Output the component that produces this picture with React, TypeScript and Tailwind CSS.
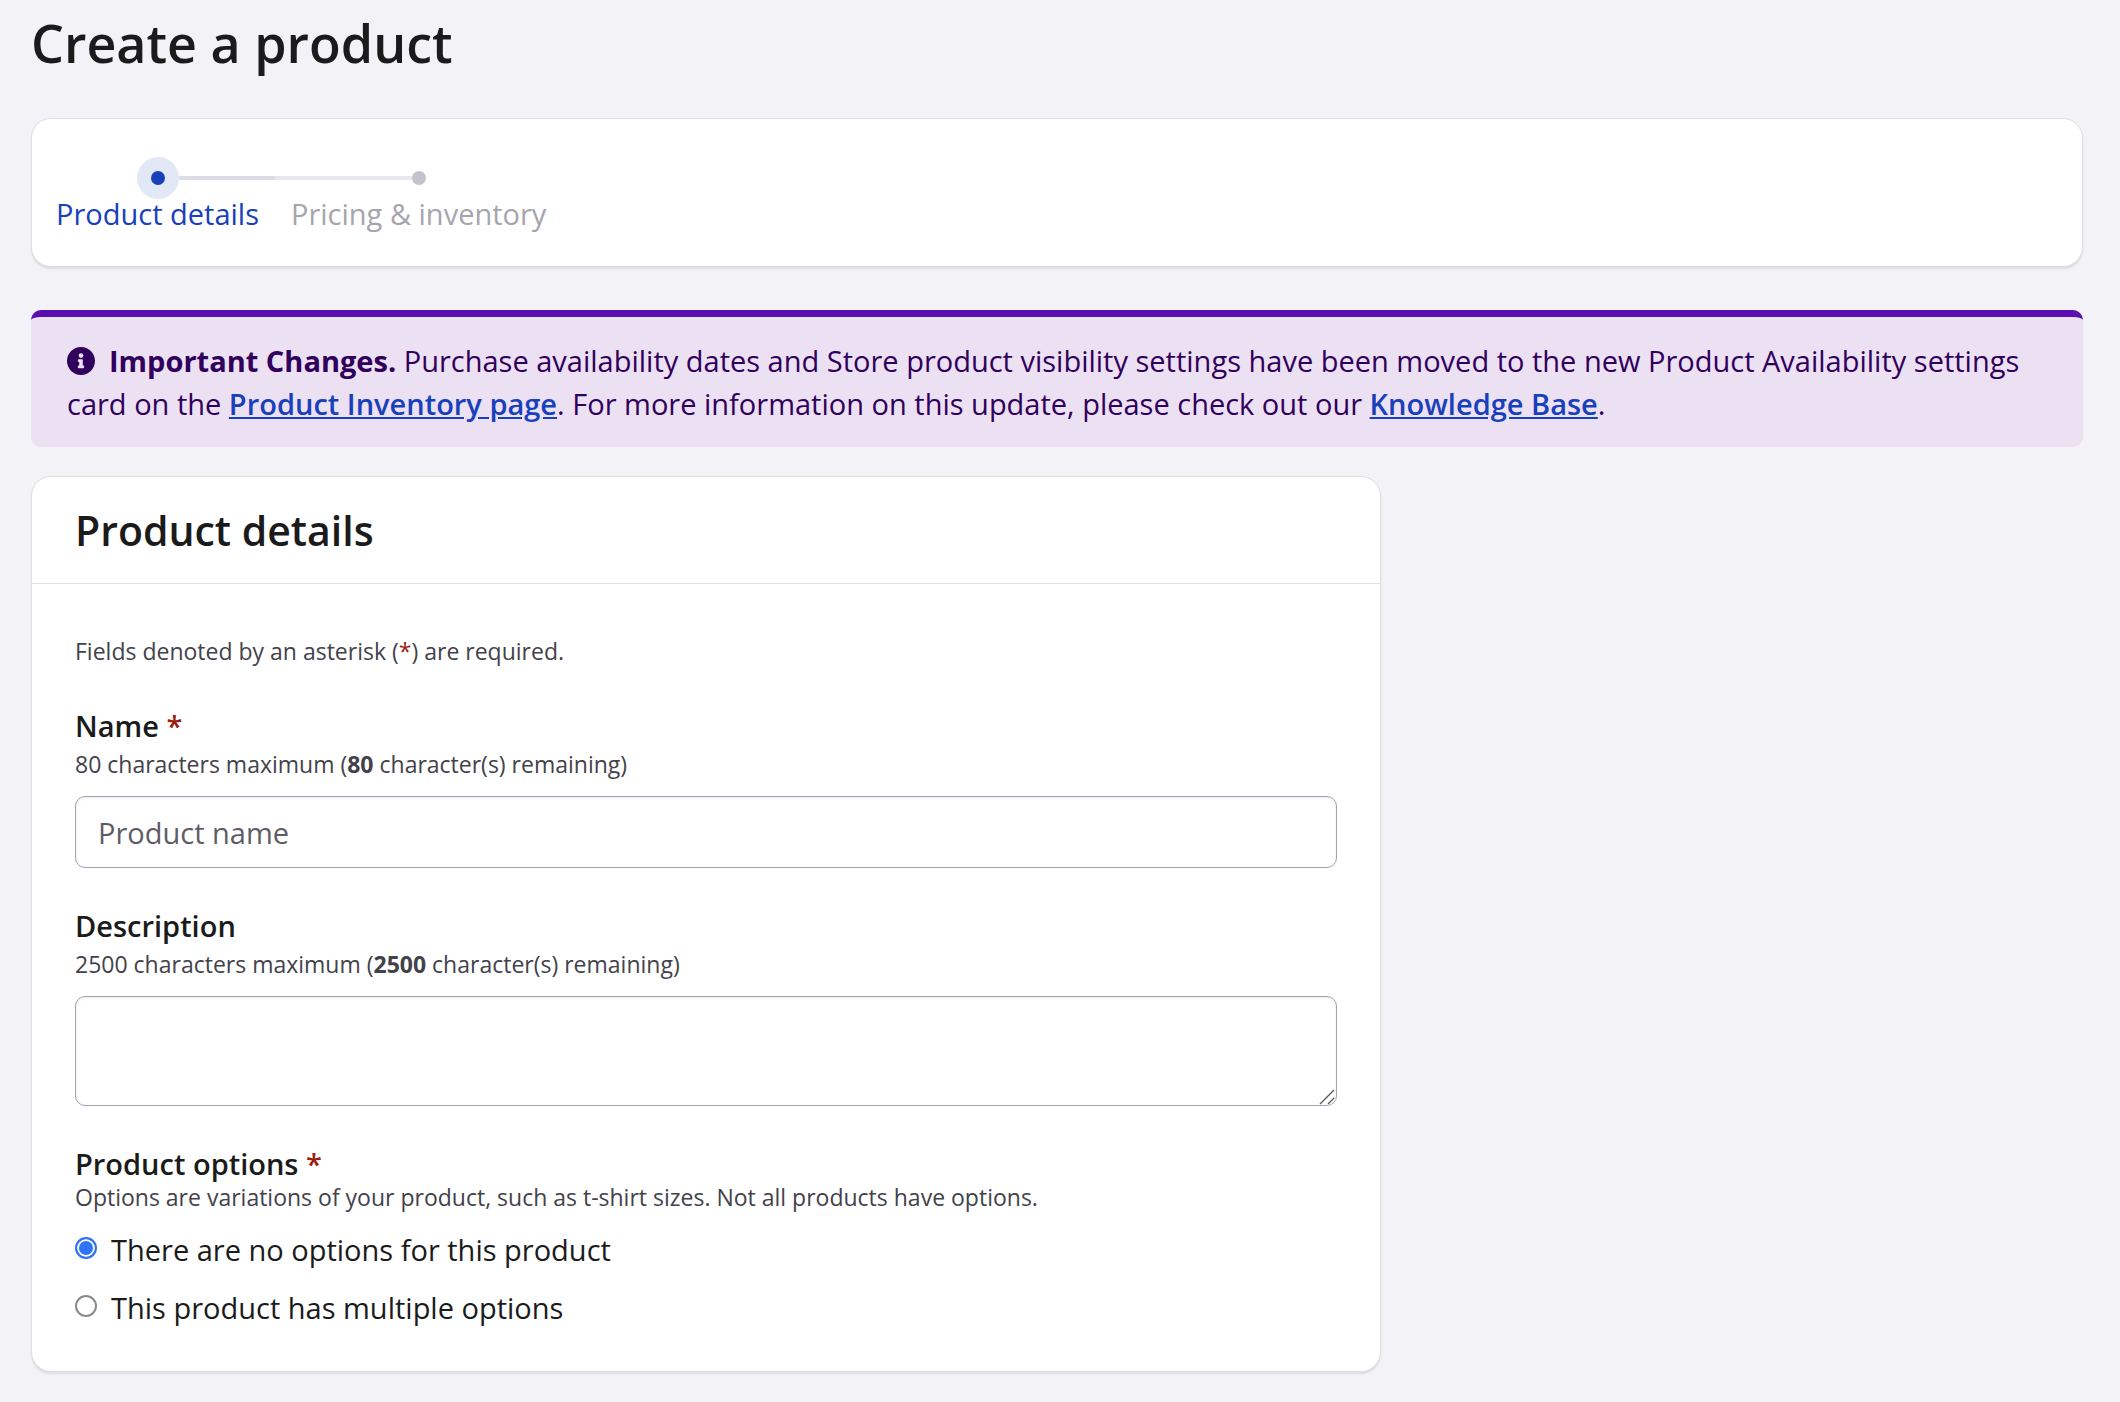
import { useState } from "react"
import type { ReactNode } from "react"
import { clsx } from "clsx"

const NAME_MAX = 80
const DESCRIPTION_MAX = 2500

const steps = ["Product details", "Pricing & inventory"]

const options = [
  { value: "single", label: "There are no options for this product" },
  { value: "multiple", label: "This product has multiple options" },
]

function InfoIcon() {
  return (
    <svg viewBox="8 8 496 496" className="mr-3.5 inline-block size-7 align-[-3px]" fill="currentColor" aria-hidden="true">
      <path d="M256 8C119 8 8 119 8 256s111 248 248 248 248-111 248-248S393 8 256 8zm0 110a42 42 0 1 1 0 84 42 42 0 0 1 0-84zm56 254c0 6.600-5.400 12-12 12h-88c-6.600 0-12-5.400-12-12v-24c0-6.600 5.400-12 12-12h12v-64h-12c-6.600 0-12-5.400-12-12v-24c0-6.600 5.400-12 12-12h64c6.600 0 12 5.400 12 12v100h12c6.600 0 12 5.400 12 12v24z" />
    </svg>
  )
}

function ResizeGrip() {
  return (
    <svg
      viewBox="0 0 16 16"
      className="pointer-events-none absolute right-0.5 bottom-px size-4"
      stroke="#555"
      strokeWidth="1.3"
      aria-hidden="true"
    >
      <path d="M1 15 15 1M9 15l6-6" />
    </svg>
  )
}

function Asterisk() {
  return <span className="text-[#9b1c10]">*</span>
}

function Stepper({ current }: { current: number }) {
  return (
    <ol className="flex">
      {steps.map((step, i) => (
        <li key={step} className="flex flex-col">
          <div className="flex h-[42px] items-center">
            <span className={clsx("h-1 flex-1", i > 0 && "bg-[#e8e8ec]")} />
            {i === current ? (
              <span className="flex size-[42px] items-center justify-center rounded-full bg-[#e2e8f6]">
                <span className="size-3.5 rounded-full bg-[#1840ba]" />
              </span>
            ) : (
              <span className="size-3.5 rounded-full bg-[#c4c3cd]" />
            )}
            <span className={clsx("h-1 flex-1", i < steps.length - 1 && "bg-[#dcdce6]")} />
          </div>
          <span className={clsx("px-4 leading-[30px]", i === current ? "text-[#1840ba]" : "text-[#a6a5ad]")}>
            {step}
          </span>
        </li>
      ))}
    </ol>
  )
}

function Remaining({ max, used }: { max: number; used: number }) {
  return (
    <p className="text-[23px] leading-[34px] text-[#43424b]">
      {max} characters maximum (<strong>{max - used}</strong> character(s) remaining)
    </p>
  )
}

function Card({ className, children }: { className?: string; children: ReactNode }) {
  return (
    <section
      className={clsx("rounded-[20px] border border-[#dfdfe2] bg-white shadow-[0_2px_2px_rgba(0,0,0,0.09)]", className)}
    >
      {children}
    </section>
  )
}

export default function App() {
  const [name, setName] = useState("")
  const [description, setDescription] = useState("")
  const [option, setOption] = useState("single")

  return (
    <main className="min-h-screen bg-[#f3f2f7] pr-[37px] pb-7 pl-[31px] font-['Open_Sans',sans-serif] text-[29px] leading-[43px] text-[#1b1b1b]">
      <h1 className="pt-[7px] text-[52px] leading-[72px] font-semibold">Create a product</h1>

      <Card className="mt-[39px] px-2 pt-[38px] pb-[37px]">
        <Stepper current={0} />
      </Card>

      <div className="mt-[43px] rounded-[10px] border-t-[7px] border-[#5b0eaf] bg-[#ece0f3] px-9 py-[22px] text-[#30005c]">
        <InfoIcon />
        <strong>Important Changes.</strong> Purchase availability dates and Store product visibility settings have been
        moved to the new Product Availability settings card on the{" "}
        <a href="#inventory" className="font-semibold text-[#1840ba] underline">
          Product Inventory page
        </a>
        . For more information on this update, please check out our{" "}
        <a href="#knowledge-base" className="font-semibold text-[#1840ba] underline">
          Knowledge Base
        </a>
        .
      </div>

      <div className="mt-[29px] grid grid-cols-3 gap-[54px]">
        <Card className="col-span-2">
          <h2 className="border-b border-[#dfdfe2] px-[43px] py-[25px] text-[41px] leading-14 font-semibold">
            Product details
          </h2>

          <form className="px-[43px] pt-[50px] pb-[42px]">
            <p className="text-[23px] leading-[34px] text-[#43424b]">
              Fields denoted by an asterisk (<Asterisk />) are required.
            </p>

            <div className="mt-9">
              <label htmlFor="name" className="block font-semibold">
                Name <Asterisk />
              </label>
              <Remaining max={NAME_MAX} used={name.length} />
              <input
                id="name"
                type="text"
                maxLength={NAME_MAX}
                placeholder="Product name"
                value={name}
                onChange={(e) => setName(e.target.value)}
                className="mt-[15px] block h-[72px] w-full rounded-[10px] border border-[#a3a1b0] bg-white px-[22px] shadow-[inset_0_1px_3px_rgba(0,0,0,0.08)] placeholder:text-[#5e5d66]"
              />
            </div>

            <div className="mt-9">
              <label htmlFor="description" className="block font-semibold">
                Description
              </label>
              <Remaining max={DESCRIPTION_MAX} used={description.length} />
              <div className="relative mt-[15px]">
                <textarea
                  id="description"
                  maxLength={DESCRIPTION_MAX}
                  value={description}
                  onChange={(e) => setDescription(e.target.value)}
                  className="block h-[110px] w-full resize-y rounded-[10px] border border-[#a3a1b0] bg-white px-[22px] py-3 shadow-[inset_0_1px_3px_rgba(0,0,0,0.08)] [&::-webkit-resizer]:bg-transparent"
                />
                <ResizeGrip />
              </div>
            </div>

            <fieldset className="mt-9">
              <legend className="font-semibold">
                Product options <Asterisk />
              </legend>
              <p className="text-[23px] leading-6 text-[#43424b]">
                Options are variations of your product, such as t-shirt sizes. Not all products have options.
              </p>
              <div className="mt-[19px] flex flex-col gap-[15px]">
                {options.map(({ value, label }) => (
                  <label key={value} className="flex items-start gap-3.5">
                    <input
                      type="radio"
                      name="options"
                      value={value}
                      checked={option === value}
                      onChange={() => setOption(value)}
                      className="mt-[9px] size-[22px] appearance-none rounded-full border-2 border-[#8a8a8a] bg-white checked:border-[#2f73f6] checked:bg-[#2f73f6] checked:shadow-[inset_0_0_0_2px_white]"
                    />
                    {label}
                  </label>
                ))}
              </div>
            </fieldset>
          </form>
        </Card>
      </div>
    </main>
  )
}
